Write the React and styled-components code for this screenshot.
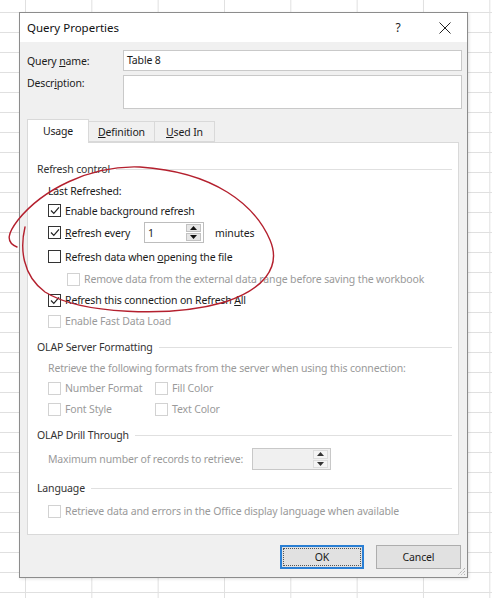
import React from "react";
import styled, { createGlobalStyle } from "styled-components";

const Global = createGlobalStyle`
  html, body { margin: 0; padding: 0; }
  body {
    font-family: "Segoe UI", "Noto Sans", sans-serif;
    color: #1b1b1b;
  }
  * { box-sizing: border-box; }
`;

const Page = styled.div`
  position: relative;
  width: 492px;
  height: 598px;
  overflow: hidden;
  padding: 12px 0 0 19px;
  background-color: #fff;
  background-image:
    linear-gradient(to right, #e0e0e0 1px, transparent 1px),
    linear-gradient(to bottom, #e0e0e0 1px, transparent 1px);
  background-size: 66.33px 20px;
  background-position: 25px 12px;
`;

const Dialog = styled.div`
  position: relative;
  width: 449px;
  height: 566px;
  border: 1px solid #8c8c8c;
  background: #f0f0f0;
  display: flex;
  flex-direction: column;
  box-shadow: 1px 1px 3px rgba(0, 0, 0, 0.12);
  font-size: 10.5px;
  letter-spacing: -0.15px;
`;

const TitleBar = styled.div`
  height: 29px;
  background: #fff;
  display: flex;
  align-items: center;
  padding: 0 12px 0 7px;
`;

const Title = styled.div`
  font-size: 11.5px;
  letter-spacing: 0;
  color: #111;
  flex: 1;
`;

const TitleButton = styled.div`
  width: 20px;
  display: flex;
  justify-content: center;
  align-items: center;
  font-size: 12px;
  color: #222;
  margin-left: ${(p) => p.$ml || 0}px;
`;

const Body = styled.div`
  flex: 1;
  padding: 8px 5px 0 7px;
  display: flex;
  flex-direction: column;
`;

const FieldGrid = styled.div`
  display: grid;
  grid-template-columns: 96px 1fr;
  row-gap: 4px;
`;

const FieldLabel = styled.div`
  padding-top: ${(p) => p.$pt || 0}px;
  display: flex;
  align-items: ${(p) => (p.$top ? "flex-start" : "center")};
`;

const TextBox = styled.div`
  height: ${(p) => p.$h}px;
  border: 1px solid #c9c9c9;
  background: #fff;
  padding: 3px 3px;
  line-height: 13px;
`;

const Tabs = styled.div`
  margin-top: 10px;
  display: flex;
  align-items: flex-end;
  position: relative;
  z-index: 1;
`;

const Tab = styled.div`
  height: ${(p) => (p.$active ? 24 : 21)}px;
  width: ${(p) => p.$w}px;
  margin-bottom: ${(p) => (p.$active ? -1 : 0)}px;
  margin-left: ${(p) => (p.$first ? 0 : -1)}px;
  border: 1px solid #d9d9d9;
  border-bottom: ${(p) => (p.$active ? "none" : "1px solid #d9d9d9")};
  background: ${(p) => (p.$active ? "#fff" : "#f0f0f0")};
  display: flex;
  align-items: center;
  justify-content: center;
  padding-bottom: ${(p) => (p.$active ? 2 : 0)}px;
`;

const Panel = styled.div`
  width: 432px;
  height: 393px;
  border: 1px solid #d9d9d9;
  background: #fff;
  padding: 15px 6px 0 9px;
  display: flex;
  flex-direction: column;
`;

const Row = styled.div`
  height: ${(p) => p.$h || 22}px;
  margin-top: ${(p) => p.$mt || 0}px;
  padding-left: ${(p) => p.$indent || 0}px;
  display: flex;
  align-items: center;
  color: ${(p) => (p.$muted ? "#9a9a9a" : "#1b1b1b")};
  white-space: nowrap;
`;

const GroupTitle = styled.span`
  color: #333;
`;

const GroupLine = styled.span`
  flex: 1;
  height: 1px;
  background: #e0e0e0;
  margin-left: 6px;
`;

const Check = styled.span`
  width: 13px;
  height: 13px;
  flex: none;
  border: 1px solid ${(p) => (p.$disabled ? "#d2d2d2" : "#333")};
  background: #fff;
  margin-right: 4px;
  display: flex;
  align-items: center;
  justify-content: center;
`;

const CheckPair = styled.span`
  display: flex;
  align-items: center;
  width: ${(p) => p.$w || "auto"};
`;

const Spin = styled.div`
  width: ${(p) => p.$w}px;
  height: ${(p) => p.$h}px;
  border: 1px solid ${(p) => (p.$disabled ? "#c8c8c8" : "#bdbdbd")};
  background: ${(p) => (p.$disabled ? "#f0f0f0" : "#fff")};
  display: flex;
  align-items: center;
  padding: 1px 2px 1px 3px;
  margin: 0 ${(p) => p.$mr || 0}px 0 ${(p) => p.$ml || 0}px;
`;

const SpinValue = styled.span`
  flex: 1;
  color: #1b1b1b;
`;

const SpinButtons = styled.div`
  display: flex;
  flex-direction: column;
  gap: 1px;
  height: 100%;
  width: 15px;
`;

const SpinButton = styled.div`
  flex: 1;
  background: ${(p) => (p.$disabled ? "#f4f4f4" : "#e6e6e6")};
  border: 1px solid ${(p) => (p.$disabled ? "#dcdcdc" : "#c2c2c2")};
  display: flex;
  align-items: center;
  justify-content: center;
`;

const Buttons = styled.div`
  margin-top: 10px;
  display: flex;
  justify-content: flex-end;
  gap: 12px;
  padding-right: 1px;
`;

const Button = styled.div`
  width: ${(p) => p.$w}px;
  height: 24px;
  background: #e1e1e1;
  border: ${(p) => (p.$default ? "2px solid #2a7fd4" : "1px solid #adadad")};
  display: flex;
  align-items: center;
  justify-content: center;
  padding: ${(p) => (p.$default ? "1px" : "0")};
`;

const FocusRing = styled.div`
  width: 100%;
  height: 100%;
  border: 1px dotted #555;
  display: flex;
  align-items: center;
  justify-content: center;
`;

const Grip = styled.svg`
  position: absolute;
  right: 1px;
  bottom: 1px;
`;

const Annotation = styled.svg`
  position: absolute;
  left: 0;
  top: 0;
  pointer-events: none;
`;

const CheckMark = () => (
  <svg width="10" height="9" viewBox="0 0 10 9">
    <polyline points="1,4.5 3.8,7.3 9,1.3" fill="none" stroke="#222" strokeWidth="1.2" />
  </svg>
);

const Box = ({ checked, disabled }) => (
  <Check $disabled={disabled}>{checked && <CheckMark />}</Check>
);

const Arrow = ({ up, color = "#111" }) => (
  <svg width="7" height="4" viewBox="0 0 7 4">
    <polygon points={up ? "0,4 3.5,0 7,4" : "0,0 3.5,4 7,0"} fill={color} />
  </svg>
);

const Spinner = ({ value, w, h, disabled, ml, mr }) => (
  <Spin $w={w} $h={h} $disabled={disabled} $ml={ml} $mr={mr}>
    <SpinValue>{value}</SpinValue>
    <SpinButtons>
      <SpinButton $disabled={disabled}>
        <Arrow up color={disabled ? "#333" : "#111"} />
      </SpinButton>
      <SpinButton $disabled={disabled}>
        <Arrow color={disabled ? "#333" : "#111"} />
      </SpinButton>
    </SpinButtons>
  </Spin>
);

const Group = ({ title, h, mt }) => (
  <Row $h={h} $mt={mt}>
    <GroupTitle>{title}</GroupTitle>
    <GroupLine />
  </Row>
);

export default function App() {
  return (
    <>
      <Global />
      <Page>
        <Dialog>
          <TitleBar>
            <Title>Query Properties</Title>
            <TitleButton>?</TitleButton>
            <TitleButton $ml={27}>
              <svg width="12" height="12" viewBox="0 0 12 12">
                <path d="M0.5 0.5 L11.5 11.5 M11.5 0.5 L0.5 11.5" stroke="#222" strokeWidth="1" />
              </svg>
            </TitleButton>
          </TitleBar>
          <Body>
            <FieldGrid>
              <FieldLabel>
                <span>
                  Query <u>n</u>ame:
                </span>
              </FieldLabel>
              <TextBox $h={21}>Table 8</TextBox>
              <FieldLabel $top $pt={1}>
                <span>
                  Descr<u>i</u>ption:
                </span>
              </FieldLabel>
              <TextBox $h={34} />
            </FieldGrid>
            <Tabs>
              <Tab $active $first $w={62}>Usage</Tab>
              <Tab $w={67}>
                <span>
                  <u>D</u>efinition
                </span>
              </Tab>
              <Tab $w={61}>
                <span>
                  <u>U</u>sed In
                </span>
              </Tab>
            </Tabs>
            <Panel>
              <Group title="Refresh control" h={22} />
              <Row $h={21} $indent={11}>Last Refreshed:</Row>
              <Row $h={19} $indent={11}>
                <Box checked />
                <span>Enable background refresh</span>
              </Row>
              <Row $h={25} $indent={11}>
                <Box checked />
                <span>
                  <u>R</u>efresh every
                </span>
                <Spinner value="1" w={60} h={21} ml={14} mr={11} />
                <span>minutes</span>
              </Row>
              <Row $h={23} $indent={11}>
                <Box />
                <span>
                  Refresh data when <u>o</u>pening the file
                </span>
              </Row>
              <Row $h={22} $indent={30} $muted>
                <Box disabled />
                <span>Remove data from the external data range before saving the workbook</span>
              </Row>
              <Row $h={20} $indent={11}>
                <Box checked />
                <span>
                  Refresh this connection on Refresh <u>A</u>ll
                </span>
              </Row>
              <Row $h={22} $indent={11} $muted>
                <Box disabled />
                <span>Enable Fast Data Load</span>
              </Row>
              <Group title="OLAP Server Formatting" h={22} mt={4} />
              <Row $h={20} $indent={11} $muted>
                Retrieve the following formats from the server when using this connection:
              </Row>
              <Row $h={20} $indent={11} $muted>
                <CheckPair $w="107px">
                  <Box disabled />
                  Number Format
                </CheckPair>
                <CheckPair>
                  <Box disabled />
                  Fill Color
                </CheckPair>
              </Row>
              <Row $h={22} $indent={11} $muted>
                <CheckPair $w="107px">
                  <Box disabled />
                  Font Style
                </CheckPair>
                <CheckPair>
                  <Box disabled />
                  Text Color
                </CheckPair>
              </Row>
              <Group title="OLAP Drill Through" h={22} mt={4} />
              <Row $h={26} $indent={11} $muted>
                <span>Maximum number of records to retrieve:</span>
                <Spinner value="" w={79} h={22} disabled ml={9} />
              </Row>
              <Group title="Language" h={22} mt={5} />
              <Row $h={22} $mt={1} $indent={11} $muted>
                <Box disabled />
                <span>Retrieve data and errors in the Office display language when available</span>
              </Row>
            </Panel>
            <Buttons>
              <Button $default $w={84}>
                <FocusRing>OK</FocusRing>
              </Button>
              <Button $w={85}>Cancel</Button>
            </Buttons>
          </Body>
          <Grip width="10" height="10" viewBox="0 0 10 10">
            <path d="M9 2 L2 9 M9 5 L5 9 M9 8 L8 9" stroke="#9a9a9a" strokeWidth="1" strokeDasharray="1 1" />
          </Grip>
        </Dialog>
        <Annotation width="492" height="598" viewBox="0 0 492 598">
          <path
            d="M25 227 C20 248, 22 275, 45 292 C80 314, 170 318, 225 302 C262 290, 282 268, 270 240 C255 205, 215 172, 140 167 C90 165, 42 190, 18 220 C8 233, 5 242, 17 247"
            fill="none"
            stroke="#b4202e"
            strokeWidth="1.4"
            strokeLinecap="round"
          />
        </Annotation>
      </Page>
    </>
  );
}
